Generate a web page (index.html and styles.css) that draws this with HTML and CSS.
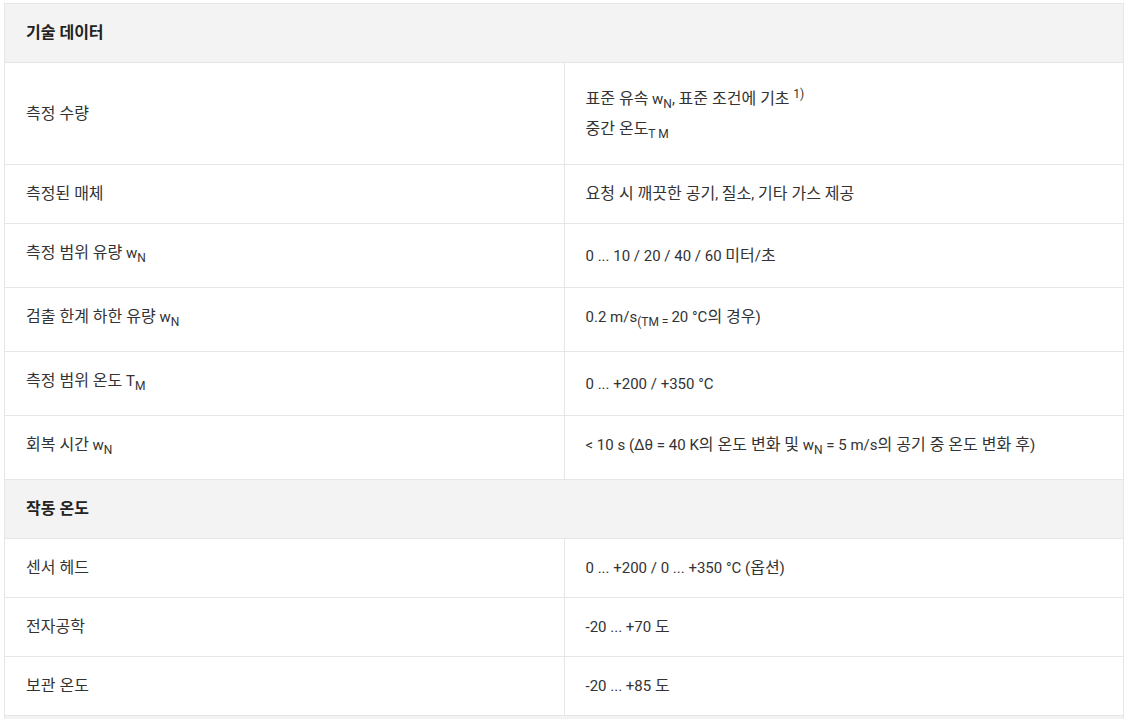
FILE: index.html
```html
<!DOCTYPE html>
<html lang="ko">
<head>
<meta charset="utf-8">
<title>기술 데이터</title>
<link rel="stylesheet" href="styles.css">
</head>
<body>
<div class="wrap">
<table class="spec">
  <tbody>
    <tr class="head"><th colspan="2"><span class="k">기술 데이터</span></th></tr>
    <tr>
      <td><span class="k">측정 수량</span></td>
      <td class="multi">
        <div class="line"><span class="k">표준 유속</span> w<sub>N</sub>, <span class="k">표준 조건에 기초</span> <sup>1)</sup></div>
        <div class="line second"><span class="k">중간 온도</span><sub>T M</sub></div>
      </td>
    </tr>
    <tr><td><span class="k">측정된 매체</span></td><td><span class="k">요청 시 깨끗한 공기</span>, <span class="k">질소</span>, <span class="k">기타 가스 제공</span></td></tr>
    <tr><td><span class="k">측정 범위 유량</span> w<sub>N</sub></td><td>0 ... 10 / 20 / 40 / 60 <span class="k">미터</span>/<span class="k">초</span></td></tr>
    <tr><td><span class="k">검출 한계 하한 유량</span> w<sub>N</sub></td><td>0.2 m/s<sub>(TM = </sub>20 °C<span class="k">의 경우</span>)</td></tr>
    <tr><td><span class="k">측정 범위 온도</span> T<sub>M</sub></td><td>0 ... +200 / +350 °C</td></tr>
    <tr><td><span class="k">회복 시간</span> w<sub>N</sub></td><td>&lt; 10 s (Δθ = 40 K<span class="k">의 온도 변화 및</span> w<sub>N</sub> = 5 m/s<span class="k">의 공기 중 온도 변화 후</span>)</td></tr>
    <tr class="head"><th colspan="2"><span class="k">작동 온도</span></th></tr>
    <tr><td><span class="k">센서 헤드</span></td><td>0 ... +200 / 0 ... +350 °C (<span class="k">옵션</span>)</td></tr>
    <tr><td><span class="k">전자공학</span></td><td>-20 ... +70 <span class="k">도</span></td></tr>
    <tr><td><span class="k">보관 온도</span></td><td>-20 ... +85 <span class="k">도</span></td></tr>
    <tr class="head"><th colspan="2">&nbsp;</th></tr>
  </tbody>
</table>
</div>
</body>
</html>
```

FILE: styles.css
```css
html, body {
  margin: 0;
  padding: 0;
  background: #ffffff;
}
body {
  font-family: Roboto, "Noto Sans CJK KR", "Liberation Sans", sans-serif;
  font-size: 15px;
  color: #333333;
}
.wrap {
  padding: 3px 4px 0 4px;
}
.spec {
  width: 1120px;
  border-collapse: collapse;
  table-layout: fixed;
}
.spec td, .spec th {
  border: 1px solid #e6e6e6;
  padding: 19px 21px;
  line-height: 20px;
  vertical-align: middle;
  text-align: left;
}
.spec td {
  width: 50%;
}
.spec td.multi {
  padding-top: 21px;
  padding-bottom: 20px;
}
.spec th {
  background: #f3f3f3;
  font-weight: 700;
  color: #222222;
}
.k {
  font-size: 16px;
}
.spec sub, .spec sup {
  font-size: 12px;
}
.line {
  line-height: 20px;
}
.line.second {
  margin-top: 5px;
}
```
